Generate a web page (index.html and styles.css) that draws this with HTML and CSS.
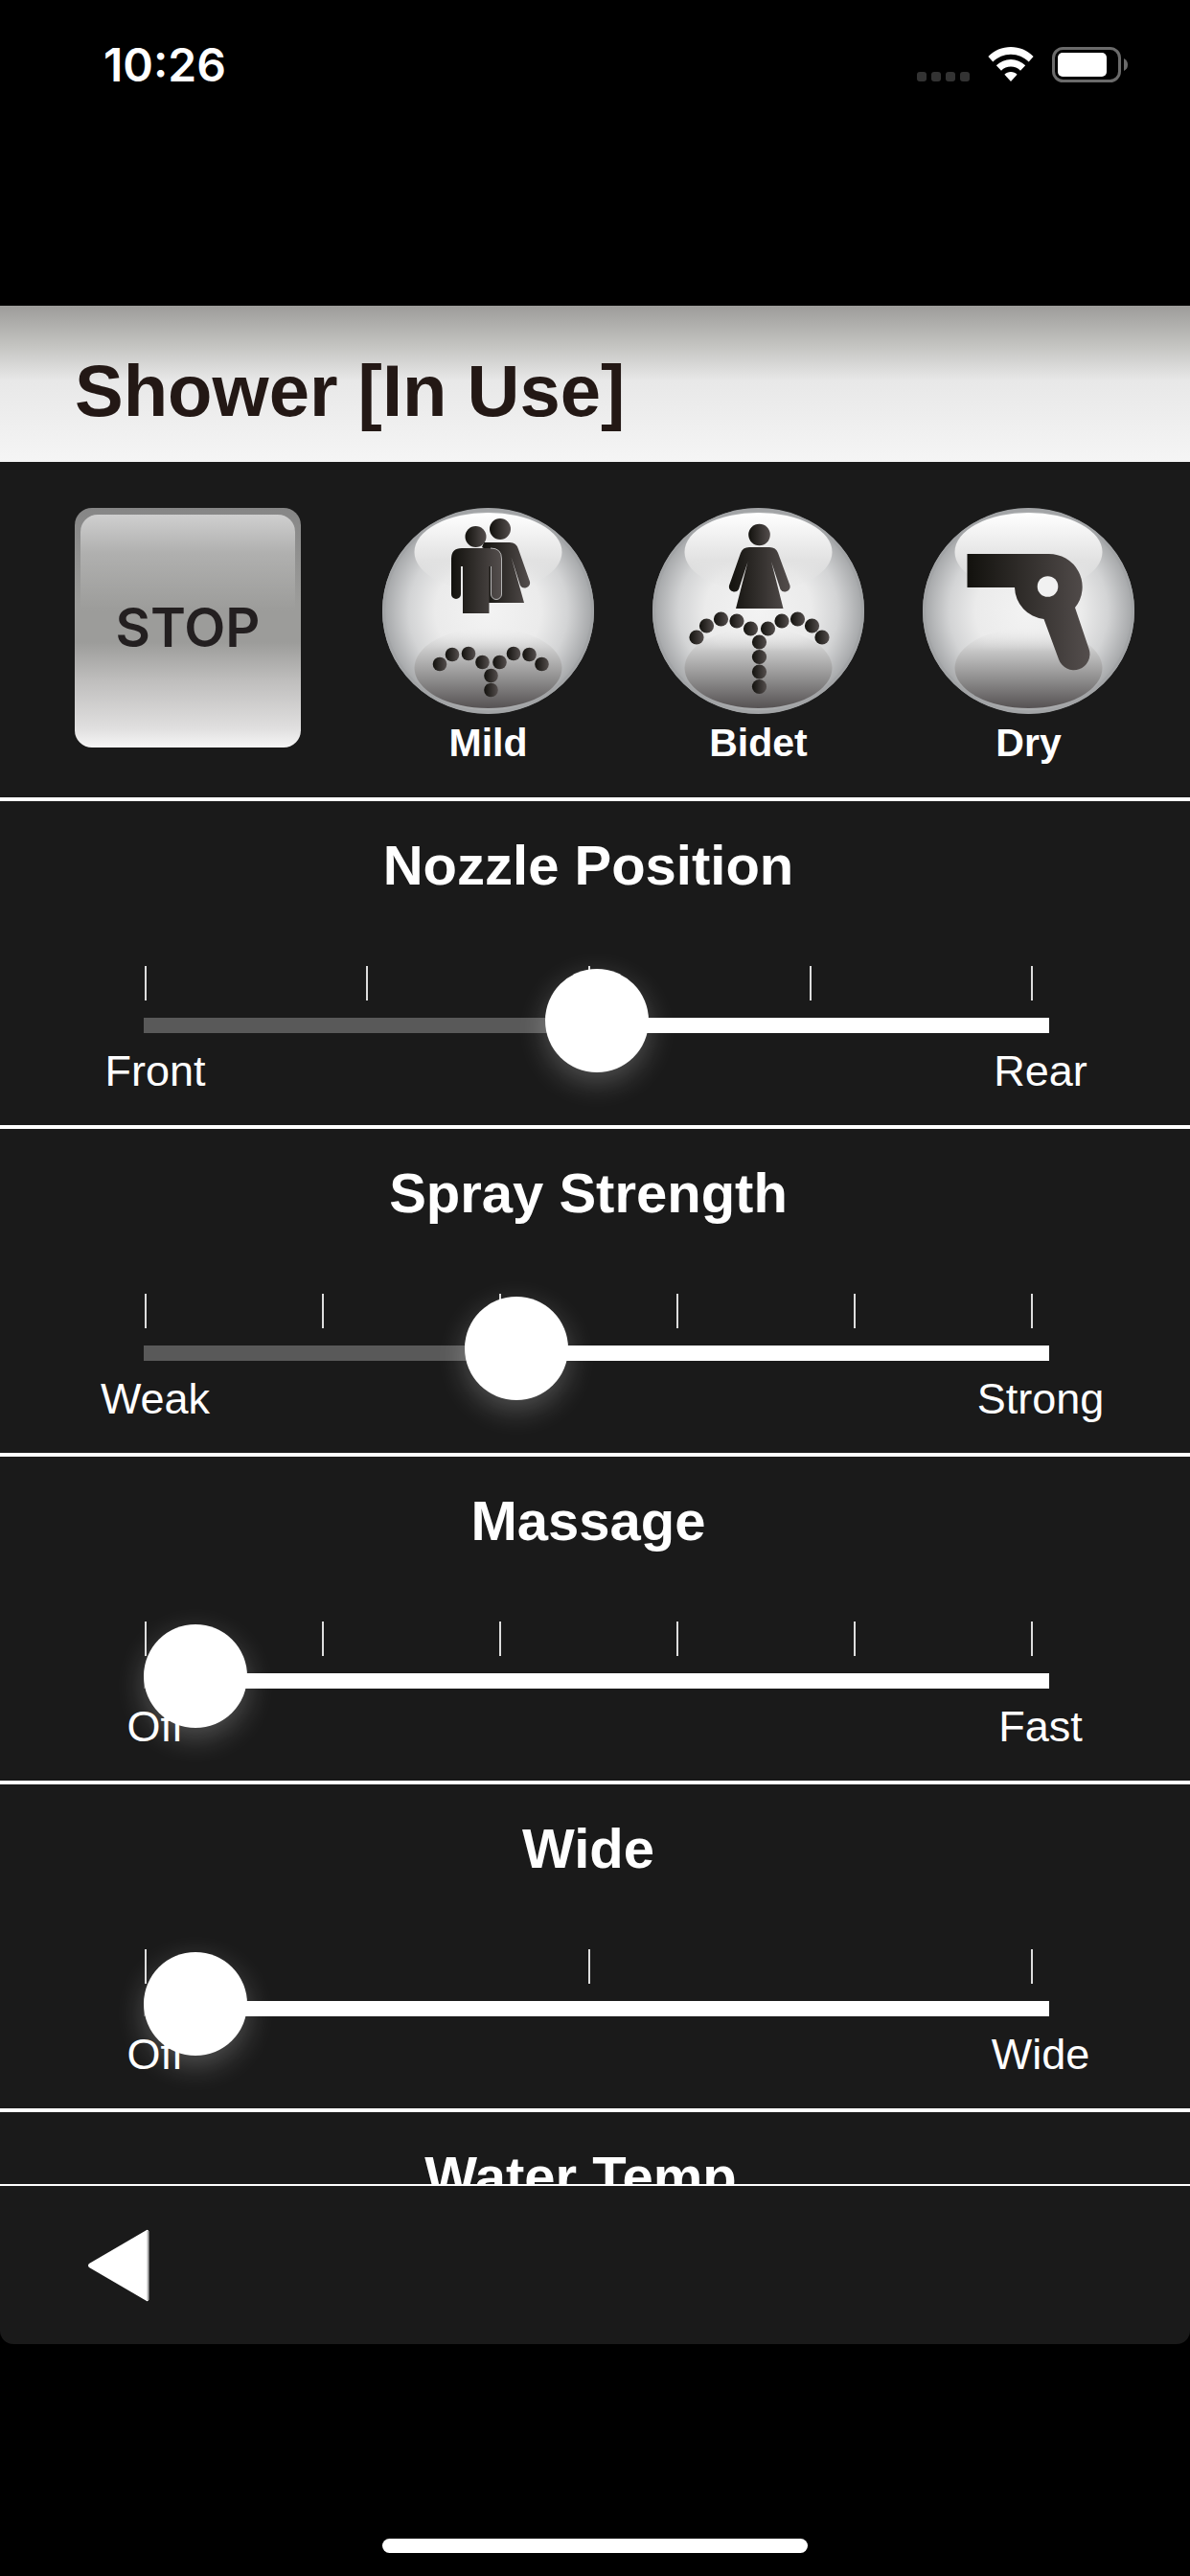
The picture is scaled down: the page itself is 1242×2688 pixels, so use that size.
FILE: index.html
```html
<!DOCTYPE html>
<html lang="en">
<head>
  <meta charset="UTF-8">
  <meta name="viewport" content="width=device-width, initial-scale=1.0">
  <title>Shower</title>
  <link rel="stylesheet" href="styles.css">
</head>
<body>
  <div class="status-bar">
    <span class="clock">10:26</span>
    <div class="status-icons">
      <svg width="55" height="37" viewBox="0 0 55 37" fill="#333">
        <rect x="0" y="26" width="10" height="10" rx="3"/>
        <rect x="15" y="26" width="10" height="10" rx="3"/>
        <rect x="30" y="26" width="10" height="10" rx="3"/>
        <rect x="45" y="26" width="10" height="10" rx="3"/>
      </svg>
      <svg width="48" height="37" viewBox="0 0 48 37" fill="#fff">
        <path d="M24 0C33 0 41.500 3.600 47.600 10L42.700 15.500C37.700 10.600 31.200 7.700 24 7.700S10.300 10.600 5.300 15.500L0.400 10C6.500 3.600 15 0 24 0Z"/>
        <path d="M24 13C29.800 13 35.100 15.300 39.200 19.300L34 24.700C31.300 22.100 27.800 20.600 24 20.600S16.700 22.100 14 24.700L8.800 19.300C12.900 15.300 18.200 13 24 13Z"/>
        <path d="M24 26C26.500 26 28.900 27 30.600 28.700L24 36L17.400 28.700C19.100 27 21.500 26 24 26Z"/>
      </svg>
      <svg width="79" height="37" viewBox="0 0 79 37">
        <rect x="1.500" y="1.500" width="69" height="34" rx="10" fill="none" stroke="#6b6b6b" stroke-width="3"/>
        <rect x="6" y="6" width="51" height="25" rx="5" fill="#fff"/>
        <path d="M75 12Q79 14 79 18.500T75 25Z" fill="#6b6b6b"/>
      </svg>
    </div>
  </div>

  <main class="app">
    <header class="app-header">
      <h1 class="app-title">Shower [In Use]</h1>
    </header>

    <div class="scroll-area">
      <section class="actions">
        <button class="stop-button" type="button"><span>STOP</span></button>

        <div class="modes">
          <button class="mode-button" type="button">
            <svg class="mode-icon" viewBox="0 0 221 215">
              <defs>
                <radialGradient id="ball">
                  <stop offset="0" stop-color="#f3f3f3"/>
                  <stop offset="0.5" stop-color="#ebebeb"/>
                  <stop offset="0.75" stop-color="#d3d4d5"/>
                  <stop offset="1" stop-color="#a2a4a6"/>
                </radialGradient>
                <linearGradient id="shine" x2="0" y2="1">
                  <stop offset="0" stop-color="#fff"/>
                  <stop offset="0.6" stop-color="#e2e2e2"/>
                  <stop offset="1" stop-color="#e6e6e6" stop-opacity="0"/>
                </linearGradient>
                <linearGradient id="shade" x2="0" y2="1">
                  <stop offset="0" stop-color="#eee" stop-opacity="0"/>
                  <stop offset="0.300" stop-color="#c4c4c4"/>
                  <stop offset="0.650" stop-color="#8d8c8c"/>
                  <stop offset="1" stop-color="#565253"/>
                </linearGradient>
                <linearGradient id="ink">
                  <stop offset="0" stop-color="#12110d"/>
                  <stop offset="1" stop-color="#544e4d"/>
                </linearGradient>
                <g id="ball-base">
                  <ellipse cx="110.500" cy="107.500" rx="110.500" ry="107.500" fill="url(#ball)"/>
                  <ellipse cx="110.500" cy="107.500" rx="109" ry="105.500" fill="none" stroke="#a2a4a6" stroke-width="3"/>
                  <ellipse cx="110.500" cy="46" rx="77" ry="41" fill="url(#shine)"/>
                  <ellipse cx="110.500" cy="167" rx="77" ry="42" fill="url(#shade)"/>
                </g>
              </defs>
              <use href="#ball-base"/>
              <g fill="url(#ink)">
                <circle cx="123" cy="22" r="11"/>
                <path d="M104 41L106 36H133Q140 36 142 43L154 77A5.500 5.500 0 0 1 144 81L134.500 51L148 99H111V45Z"/>
                <circle cx="97.500" cy="30" r="11"/>
                <path d="M72 53Q72 42 83 42H113Q124.500 42 124.500 53V90A5.500 5.500 0 0 1 113.500 90V61H111.500V110H84V61H82V90A5 5 0 0 1 72 90Z"/>
              </g>
              <path d="M113 42Q124.500 42 124.500 53V90A5.500 5.500 0 0 1 113.500 90V61" fill="none" stroke="#b5b5b5"/>
              <g fill="url(#ink)">
                <circle cx="60" cy="163" r="7.300"/>
                <circle cx="73" cy="153" r="7.300"/>
                <circle cx="90" cy="152" r="7.300"/>
                <circle cx="104.500" cy="161" r="7.300"/>
                <circle cx="122.500" cy="161" r="7.300"/>
                <circle cx="137" cy="152" r="7.300"/>
                <circle cx="153.500" cy="153" r="7.300"/>
                <circle cx="166.500" cy="163" r="7.300"/>
                <circle cx="113.500" cy="175" r="7.300"/>
                <circle cx="113.500" cy="190" r="7.300"/>
              </g>
            </svg>
            <span class="mode-label">Mild</span>
          </button>

          <button class="mode-button" type="button">
            <svg class="mode-icon" viewBox="0 0 221 215" fill="url(#ink)">
              <use href="#ball-base"/>
              <circle cx="111.500" cy="28" r="11.300"/>
              <path d="M101 41H122Q129 41 131 47L143.500 81A5.500 5.500 0 0 1 133.500 85L124 56L136.500 105H87L99.500 56L90 85A5.500 5.500 0 0 1 80 81L92 47Q94 41 101 41Z"/>
              <circle cx="46" cy="135" r="7.600"/>
              <circle cx="56.500" cy="123" r="7.600"/>
              <circle cx="71.500" cy="116" r="7.600"/>
              <circle cx="88" cy="118" r="7.600"/>
              <circle cx="102.500" cy="126" r="7.600"/>
              <circle cx="120.500" cy="126" r="7.600"/>
              <circle cx="135" cy="118" r="7.600"/>
              <circle cx="151.500" cy="116" r="7.600"/>
              <circle cx="166.500" cy="123" r="7.600"/>
              <circle cx="177" cy="135" r="7.600"/>
              <circle cx="111.500" cy="140" r="7.600"/>
              <circle cx="111.500" cy="155.500" r="7.600"/>
              <circle cx="111.500" cy="171" r="7.600"/>
              <circle cx="111.500" cy="186.500" r="7.600"/>
            </svg>
            <span class="mode-label">Bidet</span>
          </button>

          <button class="mode-button" type="button">
            <svg class="mode-icon" viewBox="0 0 221 215">
              <use href="#ball-base"/>
              <path fill="url(#ink)" d="M46.500 48H130A35 34.500 0 0 1 159 104L173.500 147A16.500 16.500 0 0 1 142 158L126.500 116A34 34 0 0 1 96 83H46.500Z"/>
              <circle cx="130.500" cy="82" r="10.800" fill="#f1f1f1"/>
            </svg>
            <span class="mode-label">Dry</span>
          </button>
        </div>
      </section>

      <section class="setting">
        <label class="setting-title" for="nozzle">Nozzle Position</label>
        <div class="ticks"><i></i><i></i><i></i><i></i><i></i></div>
        <input class="slider" id="nozzle" type="range" min="0" max="4" value="2" style="--pos: 50%">
        <div class="range-labels"><span>Front</span><span>Rear</span></div>
      </section>

      <section class="setting">
        <label class="setting-title" for="strength">Spray Strength</label>
        <div class="ticks"><i></i><i></i><i></i><i></i><i></i><i></i></div>
        <input class="slider" id="strength" type="range" min="0" max="5" value="2" style="--pos: 40%">
        <div class="range-labels"><span>Weak</span><span>Strong</span></div>
      </section>

      <section class="setting">
        <label class="setting-title" for="massage">Massage</label>
        <div class="ticks"><i></i><i></i><i></i><i></i><i></i><i></i></div>
        <input class="slider" id="massage" type="range" min="0" max="5" value="0" style="--pos: 5%">
        <div class="range-labels"><span>Off</span><span>Fast</span></div>
      </section>

      <section class="setting">
        <label class="setting-title" for="wide">Wide</label>
        <div class="ticks"><i></i><i></i><i></i></div>
        <input class="slider" id="wide" type="range" min="0" max="2" value="0" style="--pos: 5%">
        <div class="range-labels"><span>Off</span><span>Wide</span></div>
      </section>

      <section class="setting">
        <h2 class="setting-title">Water Temp.</h2>
      </section>
    </div>

    <footer class="app-footer">
      <button class="back-button" type="button" aria-label="Back">
        <svg width="64" height="76" viewBox="0 0 64 76">
          <path d="M61 1Q63 0 63 3V73Q63 76 61 75L1 40Q-1 38 1 36Z" fill="#fff"/>
          <path d="M62.500 2V74" stroke="#b5b5b5" stroke-width="2"/>
        </svg>
      </button>
    </footer>
  </main>

  <div class="home-area">
    <div class="home-indicator"></div>
  </div>
</body>
</html>
```

FILE: styles.css
```css
* {
  box-sizing: border-box;
}
body {
  margin: 0;
  height: 100vh;
  display: flex;
  flex-direction: column;
  background-color: #000;
  color: #fff;
  font-family: "Liberation Sans", Arial, sans-serif;
}
button {
  margin: 0;
  padding: 0;
  border: none;
  background: none;
  color: inherit;
  font-family: inherit;
  cursor: pointer;
}
svg {
  display: block;
}

/* status bar */
.status-bar {
  flex: none;
  height: 319px;
  padding: 40px 65px 0 108px;
  display: flex;
  justify-content: space-between;
  align-items: flex-start;
}
.clock {
  font-family: Inter, sans-serif;
  font-size: 48px;
  font-weight: 600;
  line-height: 56px;
}
.status-icons {
  display: flex;
  gap: 19px;
  padding-top: 9px;
}

/* app */
.app {
  flex: 1;
  min-height: 0;
  display: flex;
  flex-direction: column;
  background-color: #1a1a1a;
  border-radius: 0 0 14px 14px;
  overflow: hidden;
}
.app-header {
  flex: none;
  padding: 47px 78px 32px;
  background: linear-gradient(#9d9c9a, #c3c3c0 25%, #e8e8e8 48%, #f5f5f5);
}
.app-title {
  margin: 0;
  color: #231815;
  font-size: 76px;
  font-weight: bold;
  line-height: 84px;
}
.scroll-area {
  flex: 1;
  min-height: 0;
  overflow-y: auto;
  scrollbar-width: none;
}

/* stop and mode buttons */
.actions {
  display: flex;
  justify-content: space-between;
  align-items: flex-start;
  padding: 48px 58px 34px 78px;
  border-bottom: 4px solid #fff;
}
.stop-button {
  position: relative;
  width: 236px;
  height: 250px;
  border-radius: 18px;
  background: linear-gradient(#868686, #9c9c9a 40%, #9c9c9a 56%, #bfbebd 72%, #e0dfdf 92%, #f6f6f6);
  color: #231f20;
  font-family: Inter, sans-serif;
  font-size: 56px;
  font-weight: 600;
}
.stop-button::before {
  content: "";
  position: absolute;
  top: 7px;
  left: 6px;
  right: 6px;
  height: 100px;
  border-radius: 18px 18px 0 0;
  background: linear-gradient(#cfcfcf, #b0b0af 40%, #9c9c9a);
}
.stop-button span {
  position: relative;
}
.modes {
  display: flex;
  gap: 61px;
}
.mode-button {
  display: flex;
  flex-direction: column;
  align-items: center;
  gap: 7px;
}
.mode-icon {
  width: 221px;
  height: 215px;
}
.mode-label {
  font-size: 41px;
  font-weight: bold;
  line-height: 46px;
}

/* settings */
.setting {
  padding: 35px 0 31px;
  border-bottom: 4px solid #fff;
}
.setting-title {
  display: block;
  margin: 0;
  padding-right: 14px;
  font-size: 58px;
  font-weight: bold;
  line-height: 64px;
  text-align: center;
}
.ticks {
  display: flex;
  justify-content: space-between;
  height: 36px;
  margin: 73px 164px 18px 151px;
}
.ticks i {
  width: 2px;
  background-color: #ddd;
}
.slider {
  -webkit-appearance: none;
  appearance: none;
  display: block;
  position: relative;
  z-index: 1;
  width: calc(100% - 297px);
  height: 16px;
  margin: 0 147px 0 150px;
  background: none;
}
.slider::-webkit-slider-runnable-track {
  height: 16px;
  background: linear-gradient(to right, #595959 var(--pos), #fff var(--pos));
}
.slider::-webkit-slider-thumb {
  -webkit-appearance: none;
  width: 108px;
  height: 108px;
  margin-top: -51px;
  border-radius: 50%;
  background-color: #fff;
  box-shadow: 0 10px 30px rgba(255, 255, 255, 0.25);
}
.range-labels {
  display: flex;
  justify-content: space-between;
  padding: 0 81px 0 87px;
  margin-top: 15px;
  font-size: 45px;
  line-height: 50px;
  text-align: center;
}
.range-labels span {
  width: 150px;
}

/* footer */
.app-footer {
  flex: none;
  height: 167px;
  padding: 0 92px;
  display: flex;
  align-items: center;
  border-top: 2px solid #fff;
}
.home-area {
  flex: none;
  height: 242px;
  padding-bottom: 24px;
  display: flex;
  justify-content: center;
  align-items: flex-end;
}
.home-indicator {
  width: 444px;
  height: 15px;
  border-radius: 8px;
  background-color: #fff;
}
```
